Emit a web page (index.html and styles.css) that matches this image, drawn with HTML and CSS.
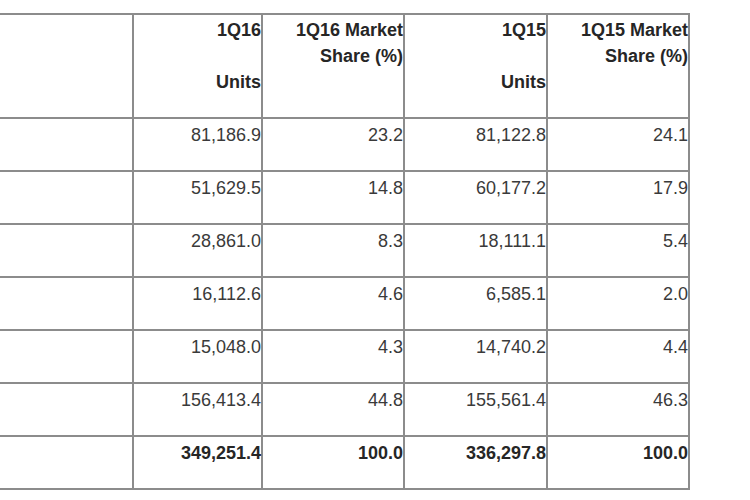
FILE: index.html
```html
<!DOCTYPE html>
<html>
<head>
<meta charset="utf-8">
<link rel="stylesheet" href="styles.css">
</head>
<body>
<div class="sheet">
  <div class="cell head"></div>
  <div class="cell head">1Q16<br><br>Units</div>
  <div class="cell head">1Q16 Market<br>Share (%)</div>
  <div class="cell head">1Q15<br><br>Units</div>
  <div class="cell head">1Q15 Market<br>Share (%)</div>

  <div class="cell"></div>
  <div class="cell">81,186.9</div>
  <div class="cell">23.2</div>
  <div class="cell">81,122.8</div>
  <div class="cell">24.1</div>

  <div class="cell"></div>
  <div class="cell">51,629.5</div>
  <div class="cell">14.8</div>
  <div class="cell">60,177.2</div>
  <div class="cell">17.9</div>

  <div class="cell"></div>
  <div class="cell">28,861.0</div>
  <div class="cell">8.3</div>
  <div class="cell">18,111.1</div>
  <div class="cell">5.4</div>

  <div class="cell"></div>
  <div class="cell">16,112.6</div>
  <div class="cell">4.6</div>
  <div class="cell">6,585.1</div>
  <div class="cell">2.0</div>

  <div class="cell"></div>
  <div class="cell">15,048.0</div>
  <div class="cell">4.3</div>
  <div class="cell">14,740.2</div>
  <div class="cell">4.4</div>

  <div class="cell"></div>
  <div class="cell">156,413.4</div>
  <div class="cell">44.8</div>
  <div class="cell">155,561.4</div>
  <div class="cell">46.3</div>

  <div class="cell total"></div>
  <div class="cell total">349,251.4</div>
  <div class="cell total">100.0</div>
  <div class="cell total">336,297.8</div>
  <div class="cell total">100.0</div>
</div>
</body>
</html>
```

FILE: styles.css
```css
html, body {
  margin: 0;
  padding: 0;
  background: #ffffff;
}

body {
  font-family: "Liberation Sans", Arial, sans-serif;
  font-size: 18px;
  line-height: 26px;
  color: #3a3a3a;
}

.sheet {
  margin-top: 13px;
  display: grid;
  grid-template-columns: 134px 129px 142px 143px 142px;
  grid-template-rows: 104px repeat(7, 53px);
  width: 690px;
  border-top: 2px solid #8c8c8c;
}

.cell {
  box-sizing: border-box;
  border-right: 2px solid #8c8c8c;
  border-bottom: 2px solid #8c8c8c;
  text-align: right;
  padding: 3px 0 0 0;
  white-space: nowrap;
}

.cell.head {
  padding-top: 2px;
  font-weight: bold;
  color: #262626;
}

.cell.total {
  font-weight: bold;
  color: #262626;
}
```
